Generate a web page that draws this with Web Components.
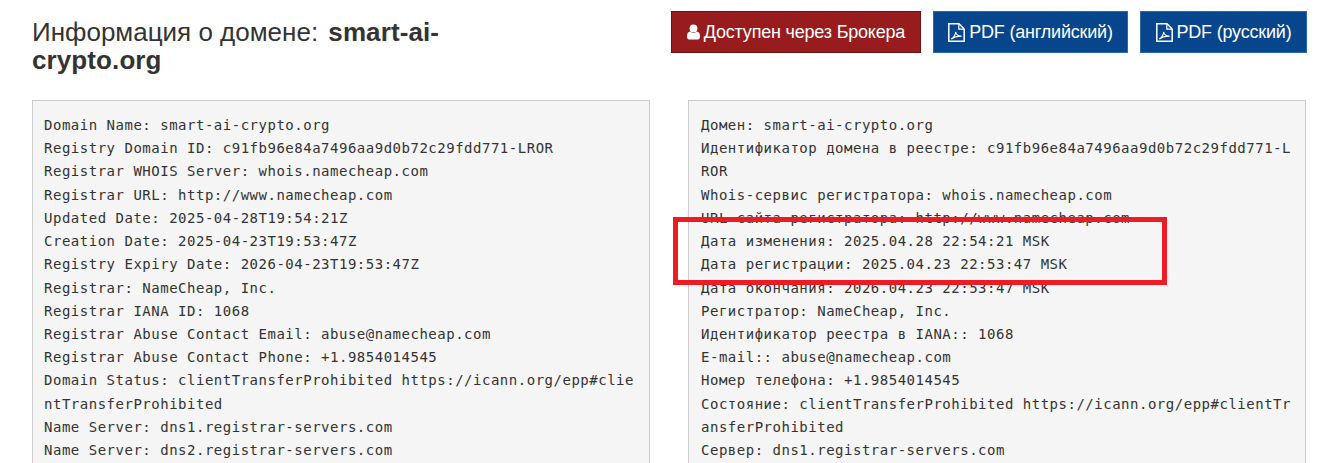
<!DOCTYPE html>
<html lang="ru"><head><meta charset="utf-8">
<style>
html,body{margin:0;height:463px;overflow:hidden;background:#fff}
body{font-family:"Liberation Sans",Arial,sans-serif;color:#333}
</style></head><body>
<domain-page>
  <page-head slot="head">
    <span slot="title">Информация о домене: <b style="margin-left:3px;letter-spacing:.1px">smart-ai-</b><br><b style="letter-spacing:.1px">crypto.org</b></span>
    <action-button slot="actions" tone="red" icon="user" wide="250">Доступен через Брокера</action-button>
    <action-button slot="actions" tone="blue" icon="pdf" wide="195" style="margin-left:12px">PDF (английский)</action-button>
    <action-button slot="actions" tone="blue" icon="pdf" wide="167" style="margin-left:12px">PDF (русский)</action-button>
  </page-head>
  <whois-box slot="left">Domain Name: smart-ai-crypto.org
Registry Domain ID: c91fb96e84a7496aa9d0b72c29fdd771-LROR
Registrar WHOIS Server: whois.namecheap.com
Registrar URL: http://www.namecheap.com
Updated Date: 2025-04-28T19:54:21Z
Creation Date: 2025-04-23T19:53:47Z
Registry Expiry Date: 2026-04-23T19:53:47Z
Registrar: NameCheap, Inc.
Registrar IANA ID: 1068
Registrar Abuse Contact Email: abuse@namecheap.com
Registrar Abuse Contact Phone: +1.9854014545
Domain Status: clientTransferProhibited https://icann.org/epp#clientTransferProhibited
Name Server: dns1.registrar-servers.com
Name Server: dns2.registrar-servers.com</whois-box>
  <whois-box slot="right" style="padding-left:12px">Домен: smart-ai-crypto.org
Идентификатор домена в реестре: c91fb96e84a7496aa9d0b72c29fdd771-LROR
Whois-сервис регистратора: whois.namecheap.com
URL сайта регистратора: http://www.namecheap.com
Дата изменения: 2025.04.28 22:54:21 MSK
Дата регистрации: 2025.04.23 22:53:47 MSK
Дата окончания: 2026.04.23 22:53:47 MSK
Регистратор: NameCheap, Inc.
Идентификатор реестра в IANA:: 1068
E-mail:: abuse@namecheap.com
Номер телефона: +1.9854014545
Состояние: clientTransferProhibited https://icann.org/epp#clientTransferProhibited
Сервер: dns1.registrar-servers.com</whois-box>
  <red-mark slot="mark"></red-mark>
</domain-page>
<script>
function def(name, html, extra){
  customElements.define(name, class extends HTMLElement{
    constructor(){super();this.attachShadow({mode:'open'}).innerHTML=html;}
    connectedCallback(){extra&&extra.call(this);}
  });
}
def('domain-page',`<style>
:host{display:block;position:relative;height:463px;overflow:hidden;padding:0 32px;box-sizing:border-box}
.cols{display:grid;grid-template-columns:618px 618px;column-gap:38px;margin-top:26px}
</style><slot name="head"></slot><div class="cols"><slot name="left"></slot><slot name="right"></slot></div><slot name="mark"></slot>`);
def('page-head',`<style>
:host{display:flex;justify-content:space-between;align-items:flex-start;padding-top:11px}
h1{margin:7px 0 0;width:440px;font:400 26px/28px "Liberation Sans",Arial,sans-serif;color:#333}
.a{display:flex}
</style><h1><slot name="title"></slot></h1><div class="a"><slot name="actions"></slot></div>`);
const ICONS={
 user:`<svg width="13" height="16" viewBox="0 0 13 16" style="margin-right:4px;flex:none"><circle cx="6.5" cy="4.4" r="3.9" fill="#fff"/><path d="M3.2 7.4C4.1 8.3 5.2 8.8 6.5 8.8S8.9 8.3 9.8 7.4C11.8 7.6 13 9 13 12.4 13 14.5 11.7 15.6 10 15.6H3C1.3 15.6 0 14.5 0 12.4 0 9 1.2 7.6 3.2 7.4Z" fill="#fff"/></svg>`,
 pdf:`<svg width="17" height="19" viewBox="0 0 17 19" style="margin-right:4px;flex:none" fill="none" stroke="#fff"><path d="M.8.8H11L16.2 6V18.2H.8Z" stroke-width="1.5"/><path d="M10.8 1V6.2H16" stroke-width="1.2"/><path d="M3.2 16C5.4 15.2 7 12.4 7.8 9 8.1 11.6 10.2 13.2 13.8 13.2 10.6 12.9 6.4 13.6 3.2 16Z" stroke-width="1.1"/></svg>`
};
def('action-button',`<style>
:host{display:flex;align-items:center;justify-content:center;box-sizing:border-box;height:42px;border:1px solid;font:400 18px/1 "Liberation Sans",Arial,sans-serif;letter-spacing:-.2px;color:#fff;white-space:nowrap}
:host([tone=red]){background:#981c1d;border-color:#6e0f10}
:host([tone=blue]){background:#07468c;border-color:#2a6ca6}
span{display:flex;align-items:center}
</style><span id="i"></span><slot></slot>`,function(){
  this.shadowRoot.getElementById('i').innerHTML=ICONS[this.getAttribute('icon')];
  this.style.width=this.getAttribute('wide')+'px';
});
def('whois-box',`<style>
:host{display:block;box-sizing:border-box;background:#f5f5f5;border:1px solid #ccc;padding:13px 11px;height:500px;font:14px/23.22px "DejaVu Sans Mono",monospace;letter-spacing:.51px;color:#333;white-space:pre-wrap;word-break:break-all}
</style><slot></slot>`);
def('red-mark',`<style>
:host{position:absolute;left:673px;top:217px;width:494px;height:68px;box-sizing:border-box;border:5.5px solid #ed1c24}
</style>`);
</script>
</body></html>
